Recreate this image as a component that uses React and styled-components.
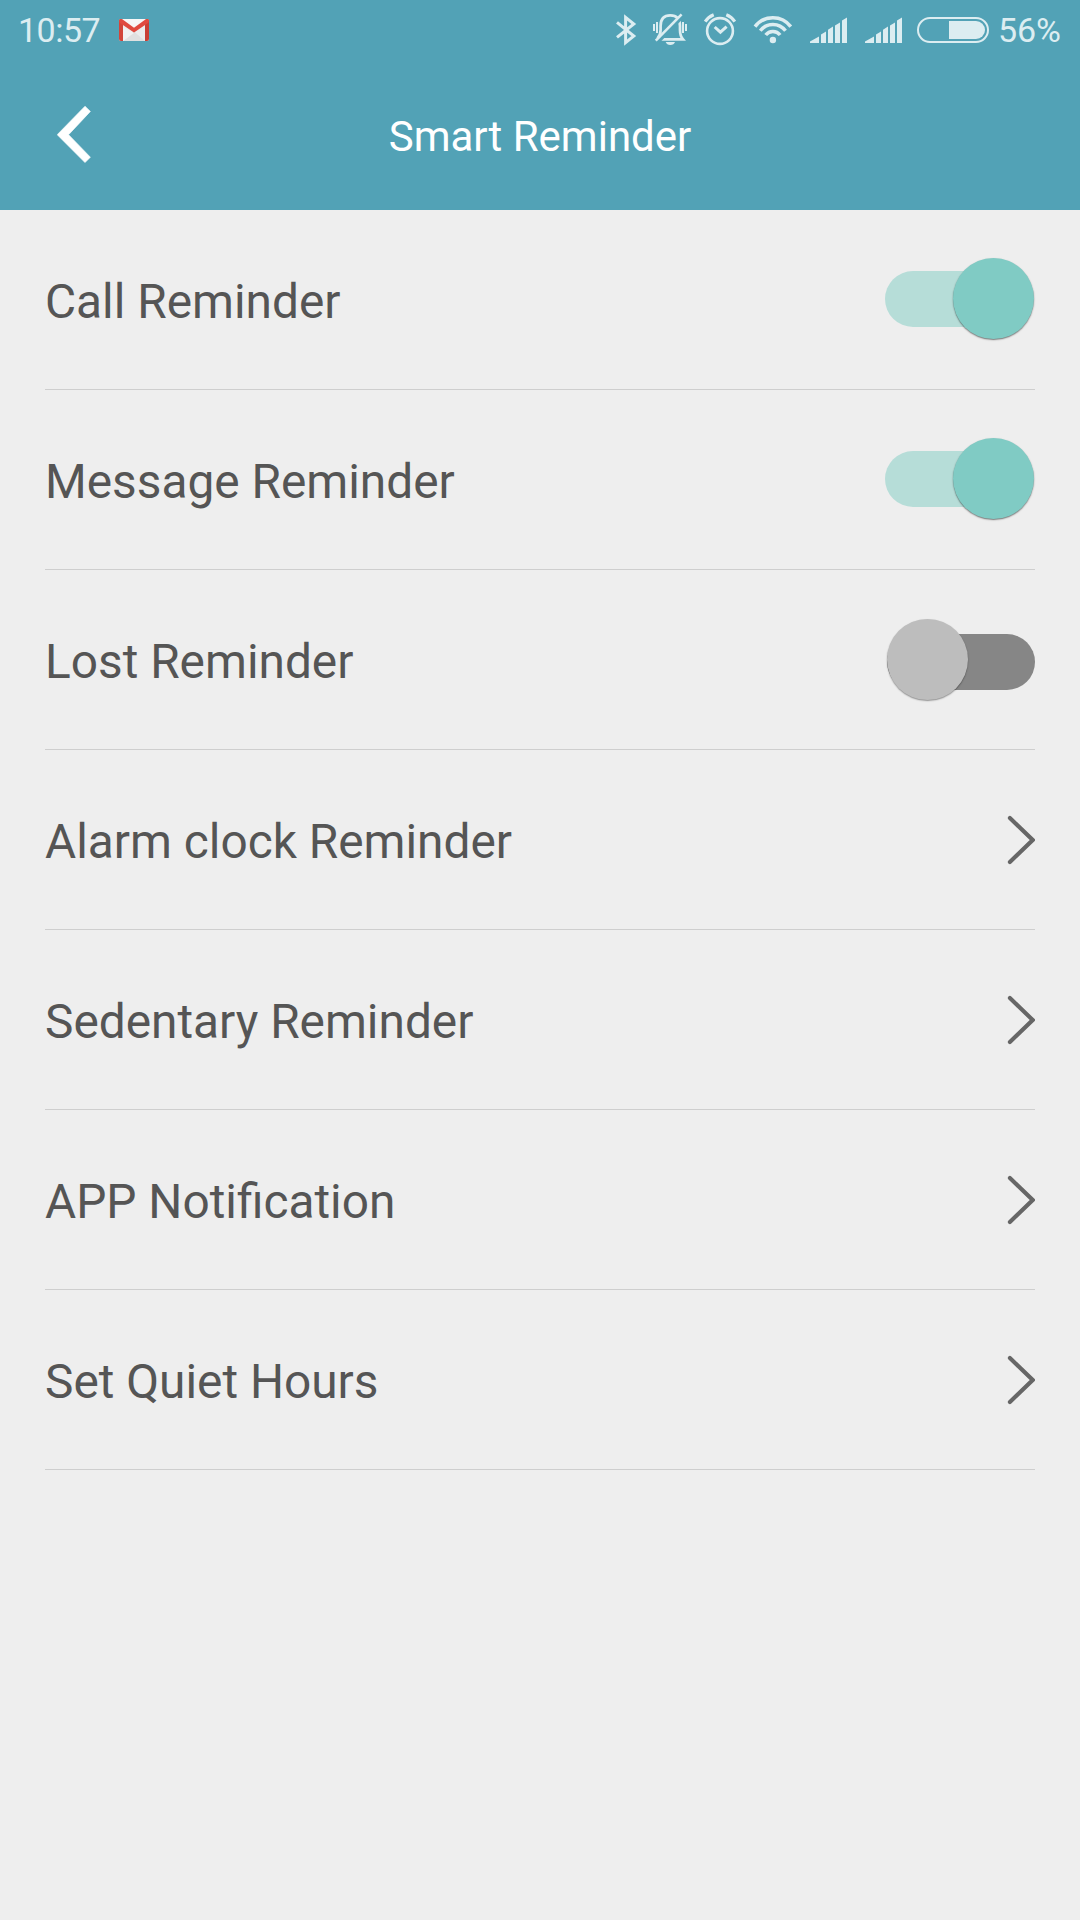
import React, { useState } from 'react';
import styled, { createGlobalStyle } from 'styled-components';

const GlobalStyle = createGlobalStyle`
  body {
    margin: 0;
    background: #eeeeee;
    font-family: Roboto, 'Liberation Sans', sans-serif;
  }
`;

const initialSwitches = [
  { name: 'Call Reminder', on: true },
  { name: 'Message Reminder', on: true },
  { name: 'Lost Reminder', on: false },
];

const links = [
  'Alarm clock Reminder',
  'Sedentary Reminder',
  'APP Notification',
  'Set Quiet Hours',
];

function GmailIcon() {
  return (
    <svg width="30" height="22" viewBox="0 0 30 22">
      <rect width="30" height="22" rx="2" fill="#ececec" />
      <path d="M4 22 L15 12.5 L26 22 Z" fill="#e0e0e0" />
      <path d="M4 22 L4 8 L15 14 Z" fill="#f1f1f1" />
      <path d="M2 0 H28 L15 10 Z" fill="#f7f7f7" />
      <path d="M0 2 Q0 0 2 0 L4 1 V22 H2 Q0 22 0 20 Z" fill="#d2453a" />
      <path d="M30 2 Q30 0 28 0 L26 1 V22 H28 Q30 22 30 20 Z" fill="#c93f35" />
      <path
        d="M0 2 Q0 0 2 0 Q3 0 4 0.8 L15 8.8 L26 0.8 Q27 0 28 0 Q30 0 30 2 Q30 3.2 29 4 L15 13.4 L1 4 Q0 3.2 0 2 Z"
        fill="#e04a3f"
      />
    </svg>
  );
}

function StatusIcons() {
  return (
    <svg width="376" height="60" viewBox="0 0 376 60" fill="none">
      {/* bluetooth */}
      <path
        d="M4 22.4 L20.8 36 L12.6 42.6 V17.4 L20.8 24 L4 37.4"
        stroke="#dcedf1"
        strokeWidth="3"
      />

      {/* muted bell */}
      <g transform="translate(-13 0)" stroke="#dcedf1">
        <path
          d="M57.5 38.5 Q60.6 35 60.6 30 V26 Q60.6 15.3 70.3 15.3 Q80 15.3 80 26 V30 Q80 36 83 39.4 H61"
          strokeWidth="2.7"
        />
        <path d="M82.6 15.7 L57.5 41.5" stroke="#52a2b6" strokeWidth="4.8" />
        <path d="M81.6 14.3 L55.8 40.7" strokeWidth="2.6" />
        <path
          d="M54 24 V31 M57 22 V33 M83 22 V33 M86 24 V31"
          strokeWidth="2"
        />
        <path
          d="M65.7 42 H75 Q74 45 70.3 45 Q66.7 45 65.7 42 Z"
          fill="#dcedf1"
          stroke="none"
        />
      </g>

      {/* alarm clock */}
      <g transform="translate(-13 0)" stroke="#dcedf1">
        <circle cx="120" cy="31" r="12.9" strokeWidth="2.6" />
        <path d="M114.7 27 L120.4 32.2 L126.6 26.7" strokeWidth="3" />
        <path
          d="M105.2 21.6 Q108.3 17 113.7 14.8 M134.8 21.6 Q131.7 17 126.3 14.8"
          strokeWidth="3.2"
        />
      </g>

      {/* wifi */}
      <g transform="translate(127 0)">
        <circle cx="32.9" cy="40" r="3.2" fill="#dcedf1" />
        <path
          d="M15 26.6 A22.4 22.4 0 0 1 50.8 26.6 M20.3 30.8 A15.7 15.7 0 0 1 45.5 30.8 M25.7 35 A9 9 0 0 1 40.1 35"
          stroke="#dcedf1"
          strokeWidth="3.5"
        />
      </g>

      <SignalBars x={127} />
      <SignalBars x={182} />

      {/* battery */}
      <rect
        x="305"
        y="18"
        width="70"
        height="24"
        rx="12"
        stroke="#dcedf1"
        strokeWidth="2"
      />
      <path d="M336 21 H363 A9 9 0 0 1 363 39 H336 Z" fill="#dcedf1" />
    </svg>
  );
}

function SignalBars({ x }) {
  return (
    <path
      transform={`translate(${x} 0)`}
      d="M70 43 V41.6 L79 36.4 V43 Z M81 43 V34.5 L86 31.5 V43 Z M88 43 V29.7 L93 26.6 V43 Z M95 43 V25.4 L100 22.4 V43 Z M102 43 V20.6 L107 17.6 V43 Z"
      fill="#dcedf1"
    />
  );
}

function Switch({ on, onClick, label }) {
  return (
    <SwitchButton role="switch" aria-checked={on} aria-label={label} onClick={onClick}>
      <Track $on={on} />
      <Thumb $on={on} />
    </SwitchButton>
  );
}

export default function App() {
  const [switches, setSwitches] = useState(initialSwitches);

  const toggle = (name) =>
    setSwitches(
      switches.map((item) =>
        item.name === name ? { ...item, on: !item.on } : item
      )
    );

  return (
    <Screen>
      <GlobalStyle />
      <Header>
        <StatusBar>
          <Clock>10:57</Clock>
          <GmailIcon />
          <StatusRight>
            <StatusIcons />
            <StatusText>56%</StatusText>
          </StatusRight>
        </StatusBar>
        <TitleBar>
          <BackButton aria-label="Back">
            <svg width="34" height="57" viewBox="0 0 34 57">
              <path
                d="M0.2 28.7 L28 0.2 L33.4 5.4 L11.6 28.7 L33.4 51.2 L28 56.6 Z"
                fill="#fff"
                stroke="#fff"
                strokeWidth="0.6"
                strokeLinejoin="round"
              />
            </svg>
          </BackButton>
          <Title>Smart Reminder</Title>
        </TitleBar>
      </Header>
      <List>
        {switches.map((item) => (
          <Row key={item.name}>
            <Label>{item.name}</Label>
            <Switch
              on={item.on}
              label={item.name}
              onClick={() => toggle(item.name)}
            />
          </Row>
        ))}
        {links.map((name) => (
          <Row key={name}>
            <Label>{name}</Label>
            <svg width="28" height="50" viewBox="0 0 28 50">
              <path
                d="M2.9 3 L25.7 25 L2.9 47"
                fill="none"
                stroke="#666"
                strokeWidth="4.1"
                strokeLinecap="round"
              />
            </svg>
          </Row>
        ))}
      </List>
    </Screen>
  );
}

const Screen = styled.div`
  min-height: 1920px;
  background: #eeeeee;
`;

const Header = styled.header`
  height: 210px;
  background: #52a2b6;
`;

const StatusBar = styled.div`
  display: flex;
  align-items: center;
  height: 60px;
  padding: 0 19px 0 18px;
  box-sizing: border-box;
`;

const StatusText = styled.span`
  color: #dcedf1;
  font-size: 34px;
  line-height: 60px;
`;

const Clock = styled(StatusText)`
  width: 101px;
  letter-spacing: -0.5px;
`;

const StatusRight = styled.div`
  display: flex;
  align-items: center;
  gap: 9px;
  margin-left: auto;
`;

const TitleBar = styled.div`
  display: grid;
  grid-template-columns: 150px 1fr 150px;
  align-items: center;
  height: 150px;
`;

const BackButton = styled.button`
  display: flex;
  margin-bottom: 1px;
  padding: 0 0 0 57px;
  border: 0;
  background: none;
`;

const Title = styled.h1`
  margin: 0;
  padding-top: 2px;
  color: #fff;
  font-size: 42px;
  font-weight: 400;
  text-align: center;
`;

const List = styled.main`
  padding: 0 45px;
`;

const Row = styled.div`
  display: flex;
  align-items: center;
  justify-content: space-between;
  height: 180px;
  box-sizing: border-box;
  border-bottom: 1px solid #cecece;
`;

const Label = styled.span`
  padding-top: 4px;
  color: #555;
  font-size: 47.8px;
  line-height: 56px;
`;

const SwitchButton = styled.button`
  display: grid;
  align-items: center;
  width: 150px;
  height: 82px;
  margin-bottom: 1px;
  padding: 0;
  border: 0;
  background: none;
`;

const Track = styled.span`
  grid-area: 1 / 1;
  width: 148px;
  height: 56px;
  margin-top: ${({ $on }) => ($on ? '0' : '6px')};
  border-radius: 28px;
  justify-self: ${({ $on }) => ($on ? 'start' : 'end')};
  background: ${({ $on }) => ($on ? '#b6ddd8' : '#868686')};
`;

const Thumb = styled.span`
  grid-area: 1 / 1;
  width: 81px;
  height: 81px;
  margin: ${({ $on }) => ($on ? '0 1px 1px' : '1px 1.5px 0')};
  border-radius: 50%;
  justify-self: ${({ $on }) => ($on ? 'end' : 'start')};
  background: ${({ $on }) => ($on ? '#80cbc4' : '#bdbdbd')};
  box-shadow: 0 1px 1.5px
    ${({ $on }) => ($on ? 'rgba(0, 0, 0, 0.5)' : 'rgba(0, 0, 0, 0.4)')};
`;
